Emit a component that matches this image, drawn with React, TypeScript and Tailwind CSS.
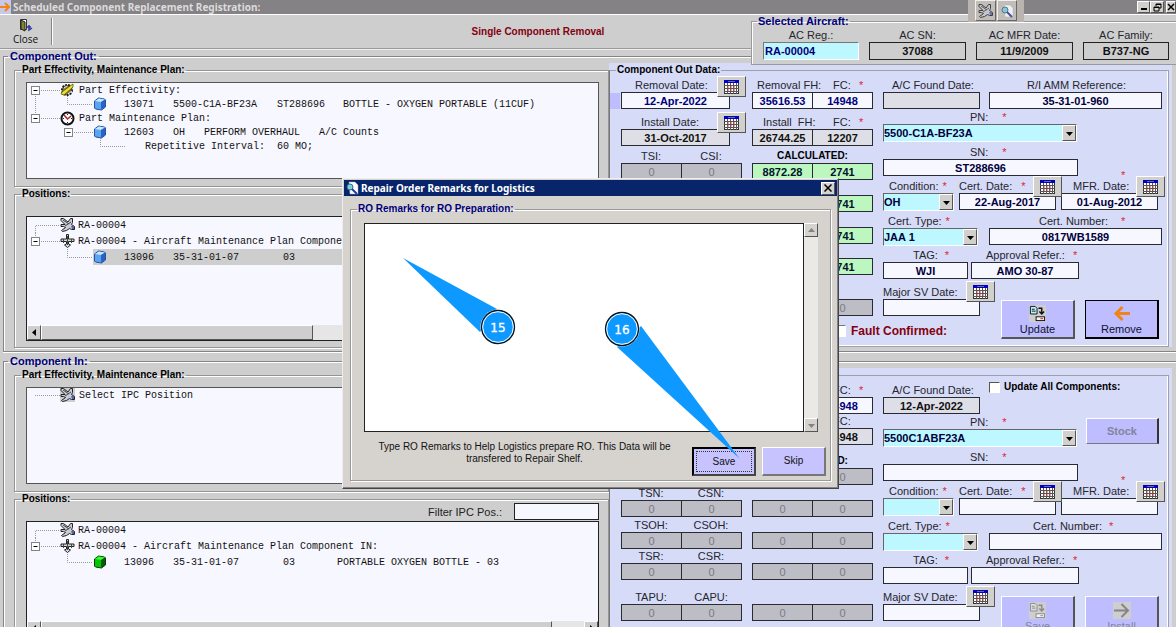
import React, { useId } from 'react'
import { clsx } from 'clsx'

const bevel = "border border-t-white border-l-white border-r-[#555] border-b-[#555]"
const labelText = "text-[11px] leading-[14px] text-[#26262e] whitespace-pre"
const boxBase = "h-[17px] min-w-0 border border-[#2a2a33] px-0 py-0 text-center text-[11px] leading-[15px] font-bold outline-none"

const tones = {
  white: "bg-[#f7f7ff] text-[#00003c]",
  navy: "bg-[#f7f7ff] text-[#00007b]",
  light: "bg-[#dedee7] text-[#111]",
  green: "bg-[#bdf7c0] text-[#00142c]",
  gray: "bg-[#bdbdc6] text-[#7b7b84] font-normal",
}
type Tone = keyof typeof tones

/* ---------- icons ---------- */

function PlaneIcon() {
  return (
    <svg width="15" height="14" viewBox="0 0 15 14" className="shrink-0">
      <path d="M10.500 0.500h2v4l-1 2 3 2v3h-3l-2-1-3 2-4 1-1-1 4-3-2-1H1v-2l2 0 2 0L1 2.500v-2h2.500L8 4z" fill="#c9ccd6" stroke="#222" strokeWidth="1" />
      <path d="M3 2l6 4M5 8l6-4" stroke="#444" strokeWidth="1" fill="none" />
      <path d="M11 8h3v3h-2z" fill="#5a62b0" />
    </svg>
  )
}

function JetIcon() {
  return (
    <svg width="15" height="14" viewBox="0 0 15 14" className="shrink-0">
      <path d="M6.500 0.500h2v4.500h5.500v2.500H8.500V10l2 1-3 2.500-3-2.500 2-1V7.500H1V5h5.500z" fill="#d8d8d8" stroke="#222" strokeWidth="1" />
      <path d="M3.500 5v4M11.500 5v4M7.500 2v9" stroke="#444" strokeWidth="1" />
    </svg>
  )
}

function CubeIcon({ green = false }: { green?: boolean }) {
  return (
    <svg width="14" height="14" viewBox="0 0 14 14" className="shrink-0">
      <path d="M1.500 4l4-3 6 1 1 1v7l-4 3-6-1-1-1z" fill={green ? "#00c800" : "#5aa5f0"} stroke={green ? "#0a3a0a" : "#2a52a0"} />
      <path d="M2 4l4-2.500 6 1L8 5z" fill={green ? "#31ff31" : "#c5e8ff"} />
      <path d="M8 5l4-2.500V10l-4 3z" fill={green ? "#0a5a0a" : "#2a62c8"} />
    </svg>
  )
}

function GearIcon() {
  return (
    <svg width="15" height="14" viewBox="0 0 15 14" className="shrink-0">
      <circle cx="7" cy="7" r="5" fill="#7c7c52" stroke="#222" strokeWidth="2" strokeDasharray="2 1" />
      <path d="M1 11l3 1 9-8V1L10 3 2 9z" fill="#f0e020" stroke="#444400" strokeWidth="0.7" />
      <path d="M4 5l3-2M8 11l4-3" stroke="#eee" />
    </svg>
  )
}

function ClockIcon() {
  return (
    <svg width="15" height="15" viewBox="0 0 15 15" className="shrink-0">
      <circle cx="7.500" cy="7.500" r="6" fill="#fff" stroke="#111" strokeWidth="2" />
      <path d="M4 4l3.500 4L11 5" stroke="#b02030" strokeWidth="1.500" fill="none" />
      <path d="M7.500 3v1M7.500 11v1M3 7.500h1M11 7.500h1" stroke="#222" />
    </svg>
  )
}

function CalendarIcon() {
  return (
    <svg width="15" height="14" viewBox="0 0 15 14">
      <rect x="0.500" y="0.500" width="14" height="13" fill="#fff" stroke="#333" />
      <rect x="0" y="0" width="15" height="3" fill="#0000c8" />
      <rect x="4" y="1" width="7" height="1" fill="#6a6a9a" />
      <path d="M3.500 3v11M6.500 3v11M9.500 3v11M12.500 3v11M0 5.500h15M0 8.500h15M0 11.500h15" stroke="#555" strokeWidth="1" />
      <path d="M3 7h9M3 10h9" stroke="#d04a4a" strokeWidth="1" strokeDasharray="2 1" />
    </svg>
  )
}

function TransferIcon({ muted = false }: { muted?: boolean }) {
  const ink = muted ? "#8a8a90" : "#111"
  return (
    <svg width="17" height="17" viewBox="0 0 18 18" className="bg-[#cecece]">
      <path d="M1.500 1.500h5l2 2v6h-7z" fill={muted ? "#ddd" : "#b8f4ff"} stroke={ink} />
      <path d="M3 4.500h3M3 6.500h4" stroke={ink} />
      <path d="M10 3.500h3.500v5M11 7l2.500 2.500L16 7" stroke={ink} strokeWidth="1.500" fill="none" />
      <rect x="7.500" y="12.500" width="9" height="4" fill="#f4f4f4" stroke={ink} />
      <path d="M12 14.500h3" stroke={muted ? ink : "#c02020"} />
    </svg>
  )
}

function ArrowIcon({ color, flip = false }: { color: string; flip?: boolean }) {
  return (
    <svg width="18" height="17" viewBox="0 0 18 17" className={flip ? "rotate-180 bg-[#cecece]" : ""}>
      <path d="M17 8.500H4M9.500 2L3 8.500 9.500 15" stroke={color} strokeWidth={flip ? 2 : 3} fill="none" />
    </svg>
  )
}

function DocIcon() {
  return (
    <svg width="13" height="14" viewBox="0 0 13 14">
      <path d="M3 1h6l3 3v9H4z" fill="#fff" stroke="#9ab" strokeWidth="0.500" />
      <circle cx="4" cy="6" r="3" fill="#7ad0d8" stroke="#3a6a8a" />
      <path d="M6 8l5 5" stroke="#2a3a9a" strokeWidth="2" />
    </svg>
  )
}

function Triangle({ dir, muted = false }: { dir: "up" | "down" | "left" | "right"; muted?: boolean }) {
  const d = { up: "M0 5h7L3.500 1z", down: "M0 2h7L3.500 6z", left: "M5 0v7L1 3.500z", right: "M2 0v7l4-3.500z" }[dir]
  return (
    <svg width="7" height="7" viewBox="0 0 7 7"><path d={d} fill={muted ? "#848284" : "#000"} /></svg>
  )
}

/* ---------- form controls ---------- */

function Star({ className = "" }: { className?: string }) {
  return <span className={clsx("text-[#e0203c]", className)}>*</span>
}

function DateButton({ className }: { className: string }) {
  return (
    <button aria-label="Pick date" className={clsx("absolute z-10 flex h-[21px] w-[29px] items-center justify-center bg-[#d2d0cc]", bevel, className)}>
      <CalendarIcon />
    </button>
  )
}

interface FieldProps {
  label: string
  value?: string
  tone?: Tone
  width: string
  pad?: string
  star?: string
  children?: React.ReactNode
}

function Field({ label, value = "", tone = "white", width, pad = "", star, children }: FieldProps) {
  const id = useId()
  return (
    <div className={clsx("relative flex flex-col", width)}>
      <label htmlFor={id} className={clsx(labelText, pad)}>
        {label}
        {star && <Star className={star} />}
      </label>
      <input id={id} defaultValue={value} className={clsx(boxBase, tones[tone])} />
      {children}
    </div>
  )
}

function Picker({ label, value = "", width, pad = "", star }: FieldProps) {
  const id = useId()
  return (
    <div className={clsx("flex flex-col", width)}>
      <label htmlFor={id} className={clsx(labelText, pad)}>
        {label}
        {star && <Star className={star} />}
      </label>
      <div className="flex h-[18px] border border-[#666] border-r-white border-b-white bg-[#bdf7ff]">
        <select id={id} defaultValue={value} className="min-w-0 flex-1 appearance-none text-[11px] leading-[15px] font-bold text-[#00003c] outline-none">
          <option>{value}</option>
        </select>
        <span className={clsx("flex w-[14px] items-center justify-center bg-[#d2d0cc]", bevel)}>
          <Triangle dir="down" />
        </span>
      </div>
    </div>
  )
}

function Pair({ head, a, b, tone, names }: { head?: React.ReactNode; a: string; b: string; tone: Tone; names: string }) {
  return (
    <div>
      <div className={clsx("flex h-[14px]", labelText)}>{head}</div>
      <div className="flex">
        <input aria-label={names + " hours"} defaultValue={a} className={clsx(boxBase, tones[tone], "w-[61px]")} />
        <input aria-label={names + " cycles"} defaultValue={b} className={clsx(boxBase, tones[tone], "-ml-px w-[61px]")} />
      </div>
    </div>
  )
}

function Heads({ a, b }: { a: string; b: string }) {
  return (
    <>
      <span className="w-[60px] text-center">{a}</span>
      <span className="w-[60px] text-center">{b}</span>
    </>
  )
}

function BigButton({ text, icon, muted, strong }: { text: string; icon: React.ReactNode; muted?: boolean; strong?: boolean }) {
  return (
    <button
      disabled={muted}
      className={clsx(
        "flex h-[39px] w-[74px] flex-col items-center justify-end border-t border-l border-r-2 border-b-2 bg-[#bdbdff] text-[11px] leading-[14px]",
        strong ? "border-black" : "border-t-white border-l-white border-r-[#555] border-b-[#555]",
        muted ? "text-[#84849a]" : "pb-px text-[#111130]"
      )}
    >
      {icon}
      {text}
    </button>
  )
}

/* ---------- component data (right side) ---------- */

function DataPanel({ incoming = false }: { incoming?: boolean }) {
  const checkId = useId()
  const calcTone: Tone = incoming ? "gray" : "green"
  const calc = incoming ? ["0", "0"] : ["8872.28", "2741"]
  return (
    <div className="w-[563px] shrink-0 bg-[#d6dbf7] pt-px pr-[3px]">
      <fieldset className="border border-[#a0a0a8] border-l-[#777] pl-[11px] pb-[7px] shadow-[inset_-1px_-1px_0_#fff]">
        <legend className="ml-[-5px] h-3 px-px text-[10px] leading-3 font-bold text-black">
          {incoming ? "Component In Data:" : "Component Out Data:"}
        </legend>
        <div className="flex gap-[10px] pt-[2px]">
          <div className="w-[121px]">
            <Field label="Removal Date:" value="12-Apr-2022" tone="navy" width="w-[109px]" pad="pl-[14px]">
              <DateButton className="-top-0.5 left-[96px]" />
              {!incoming && <span className="absolute top-[15px] -left-[11px] h-4 w-[10px] bg-[#bdbdff]" />}
            </Field>
            <div className="h-[6px]" />
            <Field label="Install Date:" value="31-Oct-2017" tone="light" width="w-[109px]" pad="pl-[20px]">
              <DateButton className="-top-[3px] left-[96px]" />
            </Field>
            <div className="h-[3px]" />
            <Pair names="Since install" head={!incoming && <Heads a="TSI:" b="CSI:" />} a="0" b="0" tone="gray" />
            <div className="h-px" />
            <Pair names="Since new" head={<Heads a="TSN:" b="CSN:" />} a="0" b="0" tone="gray" />
            <div className="h-px" />
            <Pair names="Since overhaul" head={<Heads a="TSOH:" b="CSOH:" />} a="0" b="0" tone="gray" />
            <Pair names="Since repair" head={<Heads a="TSR:" b="CSR:" />} a="0" b="0" tone="gray" />
            <div className="h-[10px]" />
            <Pair names="APU" head={<Heads a="TAPU:" b="CAPU:" />} a="0" b="0" tone="gray" />
          </div>

          <div className="w-[121px]">
            <Pair
              names="Removal"
              head={<><span className="w-[81px] pl-[5px]">Removal FH:</span><span className="w-[26px]">FC:</span><Star /></>}
              a="35616.53" b="14948" tone="navy"
            />
            <div className={incoming ? "h-0" : "h-[6px]"} />
            <Pair
              names="Install"
              head={<><span className="w-[81px] pl-[11px]">Install  FH:</span><span className="w-[26px]">FC:</span>{!incoming && <Star />}</>}
              a={incoming ? "35616.53" : "26744.25"} b={incoming ? "14948" : "12207"} tone="light"
            />
            <div className={incoming ? "h-[9px]" : "h-[3px]"} />
            <Pair names="Calculated" head={<span className="w-full text-center text-[10px] font-bold text-black">CALCULATED:</span>} a={calc[0]} b={calc[1]} tone={calcTone} />
            <div className="h-px" />
            <Pair names="Calculated new" a={calc[0]} b={calc[1]} tone={calcTone} />
            <div className="h-px" />
            <Pair names="Calculated overhaul" a={calc[0]} b={calc[1]} tone={calcTone} />
            <Pair names="Calculated repair" a={calc[0]} b={calc[1]} tone={calcTone} />
            <div className="h-[10px]" />
            <Pair names="Calculated APU" a="0" b="0" tone="gray" />
            {!incoming && (
              <div className="mt-2 ml-[82px] flex h-[14px] w-[112px] items-center gap-[5px]">
                <input id="fault" type="checkbox" className="size-3 shrink-0 appearance-none border border-[#777] border-r-white border-b-white bg-white" />
                <label htmlFor="fault" className="text-xs leading-[14px] font-bold whitespace-nowrap text-[#84000e]">Fault Confirmed:</label>
              </div>
            )}
          </div>

          <div className="min-w-0 flex-1">
            <div className="flex gap-[9px]">
              <Field label="A/C Found Date:" value={incoming ? "12-Apr-2022" : ""} tone="light" width="w-[97px]" pad="pl-[9px]" />
              {incoming ? (
                <div className="-mt-1 flex h-4 items-center gap-1">
                  <input id={checkId} type="checkbox" className="size-[11px] appearance-none border border-[#555] border-r-white border-b-white bg-white" />
                  <label htmlFor={checkId} className="text-[10px] leading-[14px] font-bold text-black">Update All Components:</label>
                </div>
              ) : (
                <Field label="R/I AMM Reference:" value="35-31-01-960" width="w-[173px]" pad="pl-[38px]" />
              )}
            </div>
            <div className="mt-px flex gap-[9px]">
              <Picker label="PN:" value={incoming ? "5500C1ABF23A" : "5500-C1A-BF23A"} width="w-[194px]" pad="pl-[87px]" star="ml-[14px]" />
              {incoming && (
                <button disabled className="mt-[3px] h-[26px] w-[73px] border border-r-2 border-t-white border-l-white border-r-[#333] border-b-[#777] bg-[#bdbdff] text-[11px] font-bold text-[#84849a]">
                  Stock
                </button>
              )}
            </div>
            <div className="mt-[3px] flex">
              <Field label="SN:" value={incoming ? "" : "ST288696"} width="w-[195px]" pad="pl-[87px]" star="ml-[14px]" />
            </div>
            <div className="mt-[3px] flex gap-[5px]">
              <Picker label="Condition:" value={incoming ? "" : "OH"} width="w-[71px]" pad="pl-[6px]" star="ml-[4px]" />
              <Field label="Cert. Date:" value={incoming ? "" : "22-Aug-2017"} width="w-[97px]" star="ml-[9px]">
                <DateButton className="-top-[3px] left-[74px]" />
              </Field>
              <Field label="MFR. Date:" value={incoming ? "" : "01-Aug-2012"} width="w-[97px]" pad="pl-[12px]">
                <Star className="absolute -top-[11px] left-[60px] text-[11px] leading-[14px]" />
                <DateButton className="-top-[3px] left-[75px]" />
              </Field>
            </div>
            <div className="mt-[3px] flex gap-[11px]">
              <Picker label="Cert. Type:" value={incoming ? "" : "JAA 1"} width="w-[95px]" pad="pl-[5px]" star="ml-[4px]" />
              <Field
                label="Cert. Number:"
                value={incoming ? "" : "0817WB1589"}
                width="w-[173px]"
                pad={incoming ? "pl-[44px]" : "pl-[50px]"}
                star={incoming ? "ml-[7px]" : "ml-[13px]"}
              />
            </div>
            <div className="mt-0.5 flex gap-[3px]">
              <Field label="TAG:" value={incoming ? "" : "WJI"} width="w-[85px]" pad="pl-[30px]" star="ml-[7px]" />
              <Field label="Approval Refer.:" value={incoming ? "" : "AMO 30-87"} width="w-[108px]" pad="pl-[15px]" star="ml-[8px]" />
            </div>
            <div className="mt-[6px] flex">
              <Field label="Major SV Date:" width="w-[97px]">
                <DateButton className="-top-[4px] left-[83px]" />
              </Field>
              <div className={clsx("ml-[21px] flex gap-[10px]", incoming ? "mt-[6px]" : "mt-[15px]")}>
                <BigButton text={incoming ? "Save" : "Update"} muted={incoming} icon={<TransferIcon muted={incoming} />} />
                <BigButton
                  text={incoming ? "Install" : "Remove"}
                  muted={incoming}
                  strong={!incoming}
                  icon={<ArrowIcon color={incoming ? "#84848a" : "#f08418"} flip={incoming} />}
                />
              </div>
            </div>
          </div>
        </div>
      </fieldset>
    </div>
  )
}

/* ---------- trees (left side) ---------- */

interface TreeRow {
  lines: string
  w: number
  box?: number
  icon?: React.ReactNode
  cells: [string, string][]
  selected?: boolean
  gap: string
}

function Tree({ rows, rowHeight }: { rows: TreeRow[]; rowHeight: string }) {
  return (
    <ul className="font-['Liberation_Mono',monospace] text-[10px] text-[#111]">
      {rows.map((row, i) => (
        <li key={i} className={clsx("flex items-center", rowHeight)}>
          <svg width={row.w} height="16" viewBox={`0 0 ${row.w} 16`} className="shrink-0">
            <path d={row.lines} stroke="#999" strokeDasharray="1 1" fill="none" />
            {row.box !== undefined && (
              <>
                <rect x={row.box - 3.5} y="4.500" width="8" height="8" fill="#fff" stroke="#848484" />
                <path d={`M${row.box - 1.5} 8.500h4`} stroke="#000" />
              </>
            )}
          </svg>
          <div className={clsx("flex items-center self-stretch whitespace-pre", row.gap, row.selected && "flex-1 bg-[#cecece]")}>
            {row.icon}
            <div className="flex">
              {row.cells.map(([text, width], n) => (
                <span key={n} className={width}>{text}</span>
              ))}
            </div>
          </div>
        </li>
      ))}
    </ul>
  )
}

const planRows: TreeRow[] = [
  { w: 33, box: 8, lines: "M12 8.500H33M8.500 12V16", icon: <GearIcon />, gap: "gap-1", cells: [["Part Effectivity:", ""]] },
  { w: 66, lines: "M8.500 0V16M40.500 0V8.500H66", icon: <CubeIcon />, gap: "gap-[17px]", cells: [["13071", "w-[49px]"], ["5500-C1A-BF23A", "w-[104px]"], ["ST288696", "w-[66px]"], ["BOTTLE - OXYGEN PORTABLE (11CUF)", ""]] },
  { w: 33, box: 8, lines: "M8.500 0V5M12 8.500H33", icon: <ClockIcon />, gap: "gap-1", cells: [["Part Maintenance Plan:", ""]] },
  { w: 66, box: 41, lines: "M45 8.500H66", icon: <CubeIcon />, gap: "gap-[17px]", cells: [["12603", "w-[49px]"], ["OH", "w-[31px]"], ["PERFORM OVERHAUL", "w-[115px]"], ["A/C Counts", ""]] },
  { w: 99, lines: "M73.500 0V8.500H99", gap: "pl-[19px]", cells: [["Repetitive Interval:  60 MO;", ""]] },
]

function positionRows(incoming: boolean): TreeRow[] {
  const cells: [string, string][] = [["13096", "w-[49px]"], ["35-31-01-07", "w-[110px]"], ["03", "w-[54px]"]]
  if (incoming) cells.push(["PORTABLE OXYGEN BOTTLE - 03", ""])
  return [
    { w: 33, lines: "M8.500 16V8.500H33", icon: <PlaneIcon />, gap: "gap-[3px]", cells: [["RA-00004", ""]] },
    { w: 33, box: 8, lines: "M8.500 0V5M12 8.500H33", icon: <JetIcon />, gap: "gap-[3px]", cells: [["RA-00004 - Aircraft Maintenance Plan Component " + (incoming ? "IN:" : "OUT:"), ""]] },
    { w: 66, lines: "M40.500 0V8.500H66", icon: <CubeIcon green={incoming} />, gap: "gap-[17px]", selected: !incoming, cells },
  ]
}

const selectRows: TreeRow[] = [
  { w: 33, lines: "M8 8.500H33", icon: <span className="bg-[#cecece]"><PlaneIcon /></span>, gap: "gap-1", cells: [["Select IPC Position", ""]] },
]

function SubGroup({ title, className, children }: { title: string; className?: string; children: React.ReactNode }) {
  return (
    <fieldset className={clsx("border border-[#949494] pr-[9px] pl-[11px] shadow-[inset_1px_1px_0_#fff,1px_1px_0_#fff]", className)}>
      <legend className="ml-[-5px] h-3 px-px text-[10px] leading-3 font-bold text-black">{title}</legend>
      {children}
    </fieldset>
  )
}

function TreePanels({ incoming = false }: { incoming?: boolean }) {
  return (
    <div className="min-w-0 flex-1 pt-px pl-[10px]">
      <SubGroup title="Part Effectivity, Maintenance Plan:" className="pb-[7px]">
        <div className="mt-[6px] h-[97px] overflow-hidden border border-[#555] bg-[#f7f7ff]">
          <Tree rows={incoming ? selectRows : planRows} rowHeight="h-[14px]" />
        </div>
      </SubGroup>
      <SubGroup title="Positions:" className="mt-px pb-[6px]">
        <div className="flex h-4 items-start justify-end gap-3">
          {incoming && (
            <>
              <label htmlFor="filter" className="text-[11px] leading-[14px] text-[#222]">Filter IPC Pos.:</label>
              <input id="filter" className="-mt-0.5 h-[17px] w-[85px] border border-[#222] bg-[#f7f7ff] outline-none" />
            </>
          )}
        </div>
        <div className="flex h-[125px] flex-col justify-between overflow-hidden border border-[#222] bg-[#f7f7ff]">
          <Tree rows={positionRows(incoming)} rowHeight="h-4" />
          <div className={clsx("flex shrink-0 bg-[#e6e6e6]", incoming ? "h-6" : "h-[15px]")}>
            <button aria-label="Scroll left" className={clsx("flex h-[15px] w-[14px] items-center justify-center bg-[#cecece]", bevel)}><Triangle dir="left" /></button>
            <div className={clsx("h-[15px] bg-[#cecece]", bevel, incoming ? "w-[511px]" : "w-[272px]")} />
            <div className="flex-1" />
            <button aria-label="Scroll right" className={clsx("flex h-[15px] w-[14px] items-center justify-center bg-[#cecece]", bevel)}><Triangle dir="right" /></button>
          </div>
        </div>
      </SubGroup>
    </div>
  )
}

function ComponentGroup({ title, incoming }: { title: string; incoming?: boolean }) {
  return (
    <fieldset className="ml-[3px] border border-r-0 border-[#848484] pb-[3px] shadow-[inset_1px_1px_0_#fff,0_1px_0_#fff]">
      <legend className="ml-[4px] h-[14px] px-0.5 text-[11px] leading-[14px] font-bold text-[#00007b]">{title}</legend>
      <div className="flex items-start pr-1">
        <TreePanels incoming={incoming} />
        <DataPanel incoming={incoming} />
      </div>
    </fieldset>
  )
}

/* ---------- header ---------- */

function AircraftBox({ label, value, width, hot }: { label: string; value: string; width: string; hot?: boolean }) {
  const id = useId()
  return (
    <div className={clsx("flex flex-col", width)}>
      <label htmlFor={id} className={clsx(labelText, "text-center")}>{label}</label>
      <input
        id={id}
        defaultValue={value}
        className={clsx("h-[18px] min-w-0 border text-[11px] leading-4 font-bold outline-none", hot ? "border-[#777] border-r-white border-b-white bg-[#bdf7ff] px-px text-[#00007b]" : "border-[#222] bg-[#cecece] text-center text-[#111]")}
      />
    </div>
  )
}

function Header() {
  return (
    <header>
      <div className="flex h-[14px] items-center justify-between bg-[#848284]">
        <div className="flex items-center gap-0.5">
          <span className="flex h-[14px] w-[11px] items-center bg-[#c8c8e8]">
            <svg width="11" height="12" viewBox="0 0 11 12"><path d="M0 6h8M5 2l4 4-4 4" stroke="#f08418" strokeWidth="2" fill="none" /></svg>
          </span>
          <h1 className="font-['Noto_Sans',sans-serif] text-[10px] leading-[14px] font-bold text-[#dcdcdc]">Scheduled Component Replacement Registration:</h1>
        </div>
        <div className="flex">
          <button aria-label="Minimize" className={clsx("flex h-3 w-[13px] items-end justify-center bg-[#d2d0cc] pb-0.5", bevel)}><span className="h-0.5 w-1.5 bg-black" /></button>
          <button aria-label="Restore" className={clsx("mr-0.5 flex h-3 w-[14px] items-center justify-center bg-[#d2d0cc]", bevel)}>
            <svg width="9" height="9" viewBox="0 0 9 9"><path d="M3 3V1h5v4H6M1 4h5v4H1zM1 4.500h5M3 1.500h5" stroke="#000" fill="none" /></svg>
          </button>
          <button aria-label="Close window" className={clsx("flex h-3 w-[10px] items-center justify-center bg-[#d2d0cc]", bevel)}>
            <svg width="8" height="8" viewBox="0 0 8 8"><path d="M1 1l6 6M7 1L1 7" stroke="#000" strokeWidth="1.500" /></svg>
          </button>
        </div>
      </div>
      <div className="flex h-[35px] items-start justify-between border-t border-b border-t-white border-b-[#999] shadow-[0_1px_0_#eee]">
        <div className="flex h-full min-w-0 flex-1 items-center">
          <button className="flex w-[51px] flex-col items-center font-['Open_Sans',sans-serif] text-[10px] leading-3 text-[#111]">
            <svg width="14" height="15" viewBox="0 0 14 15">
              <path d="M1.500 1.500h6v10h-6z" fill="#fff" stroke="#333" />
              <path d="M2 2l4 2v9l-4-2z" fill="#84842a" stroke="#222" />
              <path d="M8 9h4M10 7v5l3-2" stroke="#2a3aa0" strokeWidth="1.500" fill="none" />
            </svg>
            Close
          </button>
          <span className="h-[27px] w-0.5 border-l border-[#848484] bg-white" />
          <p className="min-w-0 flex-1 pl-[272px] text-center text-[10px] leading-[14px] font-bold text-[#84000e]">Single Component Removal</p>
        </div>
        <fieldset className="relative z-10 h-[50px] w-[425px] shrink-0 border border-r-0 border-[#999] bg-[#cecece] pl-[10px] shadow-[inset_1px_1px_0_#fff]">
          <legend className="ml-[-5px] h-3 px-px text-[11px] leading-3 font-bold text-[#00007b]">Selected Aircraft:</legend>
          <div className="flex gap-[10px] pt-px">
            <AircraftBox label="AC Reg.:" value="RA-00004" width="w-[97px] pl-px" hot />
            <AircraftBox label="AC SN:" value="37088" width="w-[97px]" />
            <AircraftBox label="AC MFR Date:" value="11/9/2009" width="w-[97px]" />
            <AircraftBox label="AC Family:" value="B737-NG" width="w-[86px]" />
          </div>
        </fieldset>
      </div>
    </header>
  )
}

function QuickIcons() {
  return (
    <div className="absolute top-0 left-[968px] z-20 flex h-[22px] items-start gap-px bg-[#b9b4b0] px-[7px]">
      <button aria-label="Aircraft" className={clsx("flex h-[21px] w-[21px] items-center justify-center bg-[#c4c0bc] opacity-80", bevel)}><PlaneIcon /></button>
      <button aria-label="Search document" className={clsx("flex h-[21px] w-[20px] items-center justify-center bg-[#c4c0bc] opacity-80", bevel)}><DocIcon /></button>
    </div>
  )
}

/* ---------- remarks dialog ---------- */

function RemarksDialog() {
  return (
    <section role="dialog" aria-label="Repair Order Remarks for Logistics" className="absolute top-[178px] left-[342px] z-30 w-[497px] border border-t-[#eee] border-r-[#444] border-b-[#444] border-l-[#eee] bg-[#d6d3ce] p-px shadow-[inset_-1px_-1px_0_#848284]">
      <div className="flex h-4 items-center gap-0.5 bg-[#08246b] px-0.5">
        <DocIcon />
        <h2 className="flex-1 font-['Noto_Sans',sans-serif] text-[10px] leading-4 font-bold text-white">Repair Order Remarks for Logistics</h2>
        <button aria-label="Close dialog" className={clsx("flex h-[13px] w-[14px] items-center justify-center bg-[#d6d3ce]", bevel)}>
          <svg width="8" height="8" viewBox="0 0 8 8"><path d="M0.500 0.500l7 7M7.500 0.500l-7 7" stroke="#000" strokeWidth="1.500" /></svg>
        </button>
      </div>
      <fieldset className="mx-[6px] mt-[7px] mb-[6px] border border-[#999] px-3 pb-1 shadow-[inset_1px_1px_0_#fff,1px_1px_0_#fff]">
        <legend className="ml-[-6px] h-3 px-px text-[10px] leading-3 font-bold text-[#00007b]">RO Remarks for RO Preparation:</legend>
        <div className="mt-[8px] flex h-[209px] pl-px">
          <textarea aria-label="RO Remarks" className="min-w-0 flex-1 resize-none border border-[#222] bg-white outline-none" />
          <div className="flex w-[14px] flex-col justify-between bg-[#ebe9e6]">
            <button aria-label="Scroll up" className={clsx("flex h-[14px] items-center justify-center bg-[#d6d3ce]", bevel)}><Triangle dir="up" muted /></button>
            <button aria-label="Scroll down" className={clsx("flex h-[14px] items-center justify-center bg-[#d6d3ce]", bevel)}><Triangle dir="down" muted /></button>
          </div>
        </div>
        <div className="-mr-[8px] mt-[15px] flex items-start gap-[6px]">
          <p className="-mt-2 flex-1 px-2 pt-[2px] text-center text-[10px] leading-3 text-[#111]">
            Type RO Remarks to Help Logistics prepare RO. This Data will be<br />transfered to Repair Shelf.
          </p>
          <button className="h-[29px] w-[64px] border-2 border-t-black border-l-black border-r-[#444] border-b-[#444] bg-[#c6c3ff] p-0.5 text-[10px] leading-3 text-[#111]">
            <span className="flex h-full items-center justify-center border border-dotted border-[#333]">Save</span>
          </button>
          <button className="h-[29px] w-[64px] border-t border-r-2 border-b-2 border-l border-t-white border-r-[#777] border-b-[#777] border-l-white bg-[#c6c3ff] text-[10px] leading-3 text-[#111]">Skip</button>
        </div>
      </fieldset>
    </section>
  )
}

function Callouts() {
  return (
    <svg width="400" height="240" viewBox="380 240 400 240" className="pointer-events-none absolute top-[240px] left-[380px] z-40 font-['DejaVu_Sans',Verdana,sans-serif]">
      <path d="M403 258L497 309 480 332z" fill="#0d99ff" />
      <path d="M739.500 458.500L641 326 617 347z" fill="#0d99ff" />
      {[{ x: 498, y: 327, n: "15" }, { x: 622, y: 329, n: "16" }].map((c) => (
        <g key={c.n}>
          <circle cx={c.x} cy={c.y} r="17.500" fill="#fff" />
          <circle cx={c.x} cy={c.y} r="16.500" fill="#0d99ff" stroke="#111" strokeWidth="1.300" />
          <circle cx={c.x} cy={c.y} r="15.300" fill="none" stroke="#fff" strokeWidth="1" />
          <text x={c.x} y={c.y + 5} textAnchor="middle" fontSize="12" fill="#fff" stroke="#fff" strokeWidth="0.300">{c.n}</text>
        </g>
      ))}
    </svg>
  )
}

export default function App() {
  return (
    <div className="h-screen overflow-hidden bg-white pb-[6px] font-['Liberation_Sans',Arial,sans-serif]">
      <main className="relative h-full overflow-hidden bg-[#cecece]">
        <Header />
        <ComponentGroup title="Component Out:" />
        <div className="h-0.5" />
        <ComponentGroup title="Component In:" incoming />
        <QuickIcons />
        <RemarksDialog />
        <Callouts />
      </main>
    </div>
  )
}
